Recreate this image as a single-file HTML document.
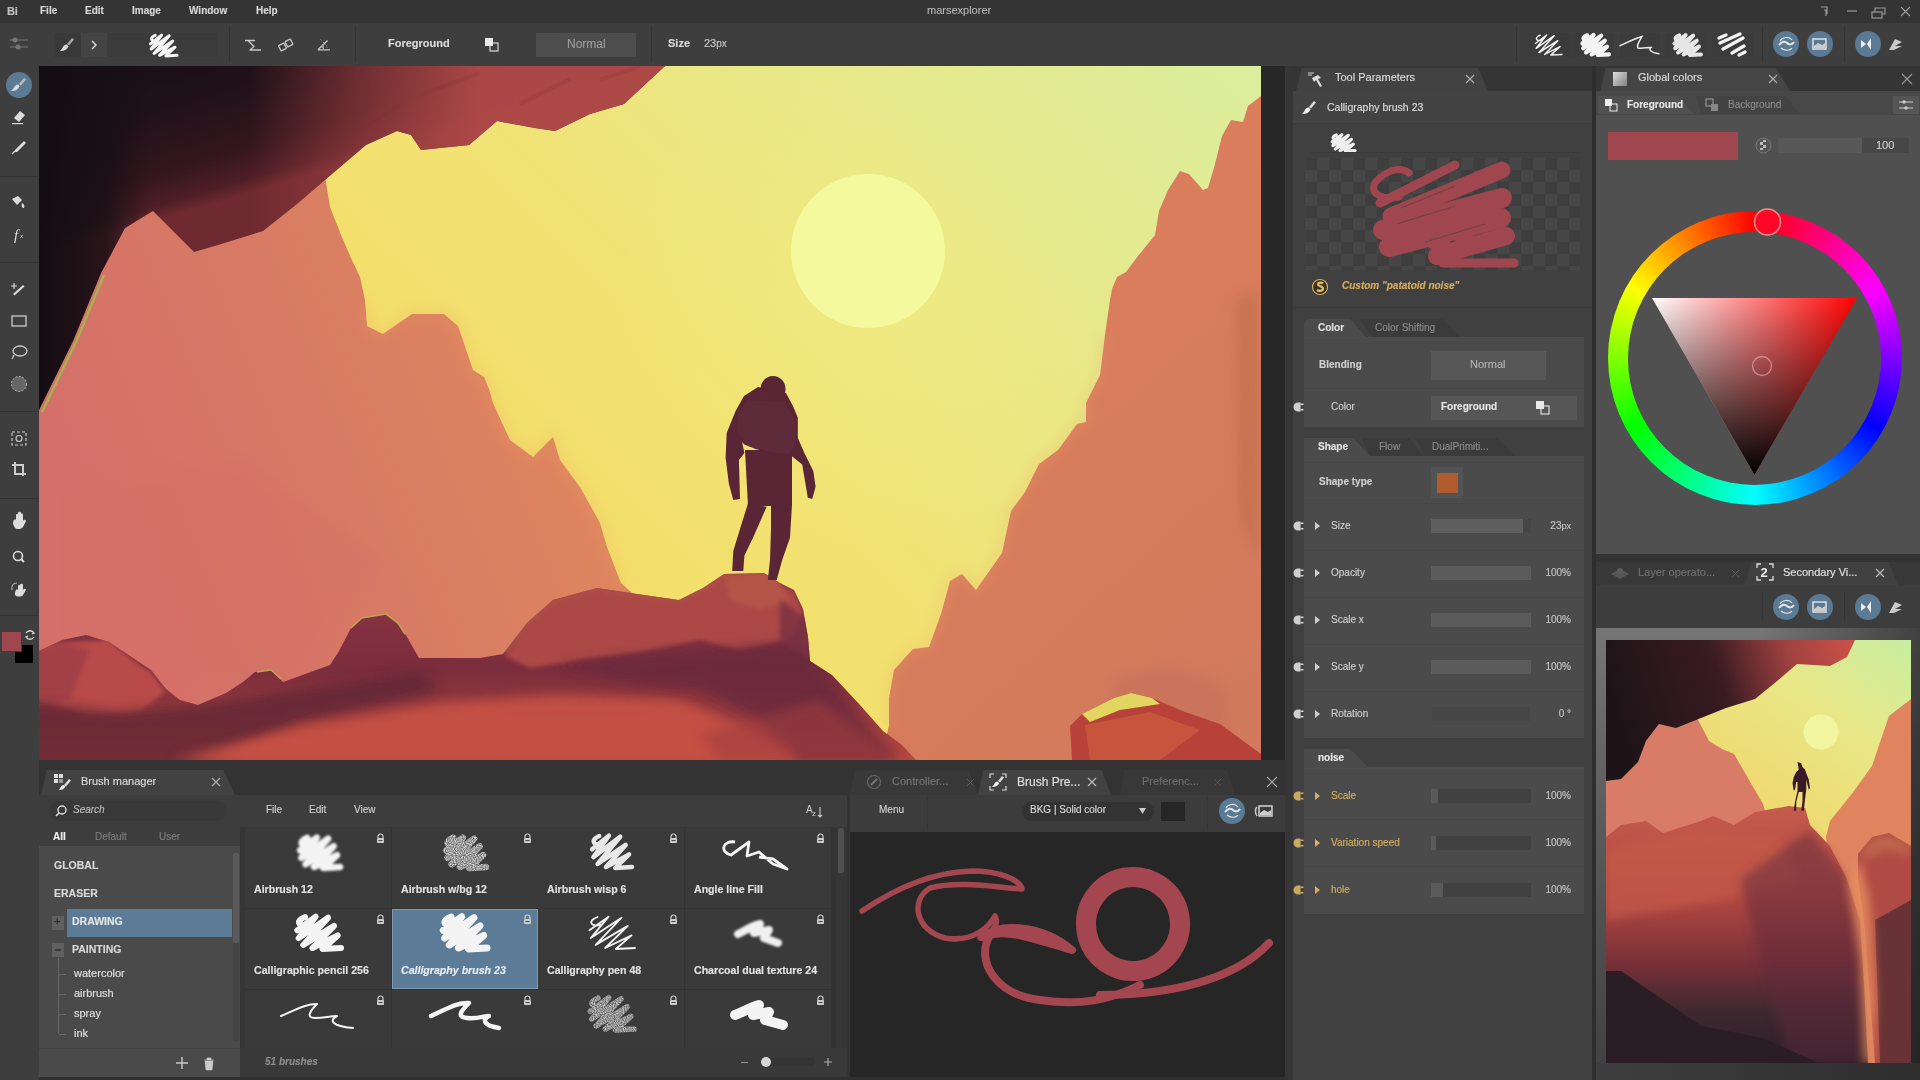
<!DOCTYPE html>
<html><head><meta charset="utf-8">
<style>
*{box-sizing:border-box;margin:0;padding:0}
body{will-change:transform}
html,body{width:1920px;height:1080px;overflow:hidden;background:#2e2e2e;font-family:"Liberation Sans",sans-serif;color:#d2d2d2;font-size:11px}
.a{position:absolute}
.t{position:absolute;white-space:nowrap;line-height:1;-webkit-text-stroke:0.15px currentColor}
.b{font-weight:bold}
</style></head><body>
<!-- MENU BAR -->
<div class="a" style="left:0;top:0;width:1920px;height:23px;background:#343434"></div>
<div class="t b" style="left:7px;top:6px;font-size:11px;color:#c0c0c0;letter-spacing:-0.3px">Bi</div>
<div class="t" style="left:40px;top:6px;font-size:10px;font-weight:bold;color:#d6d6d6">File</div>
<div class="t" style="left:85px;top:6px;font-size:10px;font-weight:bold;color:#d6d6d6">Edit</div>
<div class="t" style="left:132px;top:6px;font-size:10px;font-weight:bold;color:#d6d6d6">Image</div>
<div class="t" style="left:189px;top:6px;font-size:10px;font-weight:bold;color:#d6d6d6">Window</div>
<div class="t" style="left:256px;top:6px;font-size:10px;font-weight:bold;color:#d6d6d6">Help</div>
<div class="t" style="left:927px;top:5px;color:#b4b4b4">marsexplorer</div>
<svg class="a" style="left:1815px;top:3px" width="105" height="18" viewBox="0 0 105 18">
 <g fill="none" stroke="#9a9a9a" stroke-width="1.2">
  <path d="M6 4h6v7M9 7h2v6" />
  <path d="M32 8h10" />
  <rect x="57" y="9" width="10" height="6"/><path d="M60 9V5h10v6h-3"/>
  <path d="M86 4l9 9M95 4l-9 9"/>
 </g>
</svg>

<!-- TOOLBAR -->
<div class="a" style="left:0;top:23px;width:1920px;height:43px;background:#3e3e3e"></div>
<svg class="a" style="left:8px;top:35px" width="24" height="18" viewBox="0 0 24 18">
 <g stroke="#777" stroke-width="1.2" fill="#777"><path d="M2 5h18M2 12h18"/><circle cx="7" cy="5" r="2"/><circle cx="10" cy="12" r="2"/></g>
</svg>
<div class="a" style="left:54px;top:33px;width:27px;height:24px;background:#393939"></div>
<div class="a" style="left:81px;top:33px;width:26px;height:24px;background:#444444"></div>
<div class="a" style="left:108px;top:33px;width:109px;height:24px;background:#3b3b3b"></div>
<svg class="a" style="left:58px;top:36px" width="18" height="18" viewBox="0 0 18 18"><path d="M14 2l2 1.5-5 6-2-1.5z" fill="#aaa"/><path d="M9 8.5c-3 0-4 2-4.5 3.5L2 15c3 .5 7-1 8.5-4.5z" fill="#d8d8d8"/></svg>
<svg class="a" style="left:89px;top:39px" width="10" height="12" viewBox="0 0 10 12"><path d="M3 2l4 4-4 4" fill="none" stroke="#ddd" stroke-width="1.4"/></svg>
<svg class="a" style="left:140px;top:30px" width="44" height="30" viewBox="140 30 44 30"><path d="M150.4 43.9L161.6 35.1 151.2 49.0 169.2 35.8 154.0 53.4 172.8 41.0 159.6 55.3 175.0 47.2 165.8 56.0 177.0 55.3 M157.4 40.2C151.8 42.4 148.4 38.0 155.2 35.3" fill="none" stroke="#f4f4f4" stroke-width="3" stroke-linecap="round" stroke-linejoin="round" /></svg>
<div class="a" style="left:229px;top:26px;width:1px;height:36px;background:#333"></div>
<svg class="a" style="left:230px;top:28px" width="120" height="32" viewBox="230 28 120 32">
 <g fill="none" stroke="#c8c8c8" stroke-width="1.3">
  <path d="M245 40.5H255M248 40.5L254 46.5 250 50M249.5 50H261"/>
  <rect x="279.5" y="44" width="6" height="6" rx="0.8" transform="rotate(-28 282.5 47)"/>
  <rect x="286" y="40" width="6" height="6" rx="0.8" transform="rotate(-28 289 43)"/>
  <path d="M318 49.8H330M318 49.8L327.5 40.5"/>
  <path d="M321 47l3-3v5.8z" fill="#9a9a9a" stroke="none"/>
  <path d="M320.5 39.5l1 1M323 42l1 1M325.5 44.5l1 1M326.5 47l1 0.5" stroke-width="1" stroke="#999"/>
 </g>
</svg>
<div class="a" style="left:355px;top:26px;width:1px;height:36px;background:#353535"></div>
<div class="t b" style="left:388px;top:38px;font-size:11px;color:#dcdcdc">Foreground</div>
<svg class="a" style="left:484px;top:37px" width="16" height="16" viewBox="0 0 16 16"><rect x="6" y="6" width="8" height="8" fill="none" stroke="#ddd" stroke-width="1.2"/><rect x="1" y="1" width="8" height="8" fill="#e8e8e8"/></svg>
<div class="a" style="left:536px;top:33px;width:100px;height:24px;background:#4d4d4d"></div>
<div class="t" style="left:567px;top:38px;font-size:12px;color:#9c9c9c">Normal</div>
<div class="a" style="left:651px;top:26px;width:1px;height:36px;background:#353535"></div>
<div class="t b" style="left:668px;top:38px;font-size:11px;color:#d8d8d8">Size</div>
<div class="t" style="left:704px;top:38px;font-size:11px;color:#c8c8c8">23<span style="font-size:10px">px</span></div>

<div class="a" style="left:1516px;top:26px;width:1px;height:36px;background:#353535"></div>
<div class="a" style="left:1528px;top:33px;width:42px;height:24px;background:#3b3b3b"></div>
<div class="a" style="left:1574px;top:33px;width:40px;height:24px;background:#3b3b3b"></div>
<div class="a" style="left:1620px;top:33px;width:40px;height:24px;background:#3b3b3b"></div>
<div class="a" style="left:1666px;top:33px;width:40px;height:24px;background:#3b3b3b"></div>
<div class="a" style="left:1711px;top:33px;width:42px;height:24px;background:#3b3b3b"></div>
<svg class="a" style="left:1525px;top:28px" width="235" height="34" viewBox="1525 28 235 34">
<path d="M1535.4 43.5L1546.6 35.0 1536.2 48.3 1554.2 35.7 1539.0 52.5 1557.8 40.7 1544.6 54.4 1560.0 46.6 1550.8 55.0 1562.0 54.4 M1542.4 39.9C1536.8 42.0 1533.4 37.8 1540.2 35.3" fill="none" stroke="#f4f4f4" stroke-width="1.5" stroke-linecap="round" stroke-linejoin="round" />
<path d="M1582.4 43.5L1593.6 35.0 1583.2 48.3 1601.2 35.7 1586.0 52.5 1604.8 40.7 1591.6 54.4 1607.0 46.6 1597.8 55.0 1609.0 54.4 M1589.4 39.9C1583.8 42.0 1580.4 37.8 1587.2 35.3" fill="none" stroke="#f4f4f4" stroke-width="4.2" stroke-linecap="round" stroke-linejoin="round" />
<path d="M1620 45.7C1628 42 1636 38 1642 36.5 1640 40 1636 45 1638 48 1643 49 1648 47 1651 47.5 1648 50 1652 53 1659 53.7" fill="none" stroke="#eeeeee" stroke-width="1.5" stroke-linecap="round"/>
<path d="M1674.4 43.5L1685.6 35.0 1675.2 48.3 1693.2 35.7 1678.0 52.5 1696.8 40.7 1683.6 54.4 1699.0 46.6 1689.8 55.0 1701.0 54.4 M1681.4 39.9C1675.8 42.0 1672.4 37.8 1679.2 35.3" fill="none" stroke="#e6e6e6" stroke-width="4" stroke-linecap="round" stroke-linejoin="round" />
<path d="M1719 38l7-3M1720 43l20-9M1723 49l20-11M1732 53l12-7M1739 55l6-3" fill="none" stroke="#f2f2f2" stroke-width="3.4" stroke-linecap="round"/>
</svg>
<div class="a" style="left:1762px;top:26px;width:1px;height:36px;background:#353535"></div>
<div class="a" style="left:1773px;top:31px;width:26px;height:26px;border-radius:50%;background:#5b7a94"></div>
<div class="a" style="left:1807px;top:31px;width:26px;height:26px;border-radius:50%;background:#5b7a94"></div>
<div class="a" style="left:1844px;top:26px;width:1px;height:36px;background:#353535"></div>
<div class="a" style="left:1855px;top:31px;width:26px;height:26px;border-radius:50%;background:#5b7a94"></div>
<svg class="a" style="left:1773px;top:31px" width="130" height="26" viewBox="0 0 130 26">
 <g fill="none" stroke="#e8e8e8" stroke-width="2"><path d="M6 14c3-4 6-4 8-2s5 2 7-1"/><path d="M7 10c2-4 9-5 12-1M8 17c3 3 9 3 11 0" stroke-width="1.2"/></g>
 <rect x="40" y="8" width="13" height="10" fill="none" stroke="#e8e8e8" stroke-width="1.4"/><path d="M41 15l4-3 4 2 3-2v5h-11z" fill="#ccc"/>
 <path d="M88 9l5 4-5 4zM98 7l-4 6 4 6z" fill="#eee"/>
 <path d="M122 8l7 3-7 4 7 0-8 4h-5z" fill="#c9c9c9"/>
</svg>

<!-- LEFT TOOLS -->
<div class="a" style="left:0;top:66px;width:39px;height:1014px;background:#3e3e3e"></div>
<div class="a" style="left:0;top:176px;width:39px;height:1px;background:#333"></div>
<div class="a" style="left:0;top:262px;width:39px;height:1px;background:#333"></div>
<div class="a" style="left:0;top:411px;width:39px;height:1px;background:#333"></div>
<div class="a" style="left:0;top:498px;width:39px;height:1px;background:#333"></div>
<div class="a" style="left:0;top:615px;width:39px;height:1px;background:#333"></div>
<div class="a" style="left:6px;top:72px;width:26px;height:26px;border-radius:50%;background:#5b7a94"></div>
<svg class="a" style="left:0;top:66px" width="39" height="540" viewBox="0 66 39 540">
 <g fill="#dcdcdc">
  <path d="M24 78l2 1.5-5 6-2-1.5z" fill="#bbb"/><path d="M18.5 84.5c-3 0-4 2-4.5 3.5L11 91c3 .5 7-1 8.5-4.5z"/>
  <path d="M14 118l6-7 5 4-6 7z"/><rect x="12" y="123" width="11" height="1.2"/>
  <path d="M24 141l2 2-9 9-2 0 0-2z"/><path d="M12 154l3-3" stroke="#ddd" stroke-width="1.3"/>
  <path d="M12 199l6-3 4 4-5 5z"/><path d="M22 203c2 1 3 3 2 5-2 0-3-2-2-5z"/>
  <text x="14" y="240" font-family="Liberation Serif" font-style="italic" font-size="15" fill="#ddd">f</text><text x="20" y="238" font-family="Liberation Serif" font-style="italic" font-size="7" fill="#ddd">x</text>
  <path d="M13 294l10-9 1.5 1.5-10 9z"/><path d="M14 283v6M11 286h6" stroke="#ddd" stroke-width="1.2"/>
  <rect x="12" y="316" width="14" height="10" fill="none" stroke="#ccc" stroke-width="1.3"/>
  <ellipse cx="20" cy="351" rx="7" ry="5" fill="none" stroke="#ccc" stroke-width="1.3"/><path d="M14 355l-2 4" stroke="#ccc" stroke-width="1.2"/>
  <circle cx="19" cy="384" r="7.5" fill="#666" stroke="#bbb" stroke-width="1" stroke-dasharray="2 1.5"/>
  <rect x="12" y="432" width="14" height="13" fill="none" stroke="#ccc" stroke-width="1.2" stroke-dasharray="3 2"/><circle cx="19" cy="438.5" r="3" fill="none" stroke="#ccc" stroke-width="1.1"/>
  <path d="M15 462v12h11M12 465h11v11" fill="none" stroke="#ccc" stroke-width="2"/>
  <path d="M13 524c0-4 2-6 3-4v-5c1-2 2-1 2 0v4-6c1-2 3-1 3 0v6-5c1-1 2-1 2 1v6c1-1 2-2 3 0l-3 6c-1 2-6 3-8 1z"/>
  <circle cx="18" cy="556" r="4.5" fill="none" stroke="#ddd" stroke-width="1.6"/><path d="M21 559l3 3" stroke="#ddd" stroke-width="2"/>
  <path d="M15 594c0-4 2-6 3-4v-4c1-2 2-1 2 0v3-4c1-2 3-1 3 0v5c1-1 2-2 3 0l-3 5c-1 2-6 2-8 0z"/><path d="M12 590c-1-4 1-7 5-7" fill="none" stroke="#aaa" stroke-width="1.2"/>
 </g>
</svg>
<div class="a" style="left:2px;top:632px;width:20px;height:20px;background:#a0464f"></div>
<div class="a" style="left:15px;top:645px;width:18px;height:18px;background:#000"></div>
<div class="a" style="left:2px;top:632px;width:20px;height:20px;background:#a0464f;border-right:1px solid #3e3e3e;border-bottom:1px solid #3e3e3e"></div>
<svg class="a" style="left:24px;top:628px" width="12" height="14" viewBox="0 0 12 14"><path d="M2 5c2-3 6-3 8 0M8 3l2 2-2 1M10 9c-2 3-6 3-8 0M4 11l-2-2 2-1" fill="none" stroke="#ddd" stroke-width="1.3"/></svg>

<!-- CANVAS -->
<svg class="a" style="left:39px;top:66px" width="1222" height="694" viewBox="39 66 1222 694">
 <defs>
  <linearGradient id="sky" x1="1261" y1="66" x2="560" y2="760" gradientUnits="userSpaceOnUse">
   <stop offset="0" stop-color="#dcee9e"/><stop offset="0.35" stop-color="#e8e888"/><stop offset="0.65" stop-color="#f2e272"/><stop offset="1" stop-color="#f4da62"/>
  </linearGradient>
  <radialGradient id="glow" cx="868" cy="300" r="260" gradientUnits="userSpaceOnUse">
   <stop offset="0" stop-color="#f6f080" stop-opacity="0.35"/><stop offset="1" stop-color="#f6f080" stop-opacity="0"/>
  </radialGradient>
  <linearGradient id="lcliff" x1="80" y1="480" x2="520" y2="300" gradientUnits="userSpaceOnUse">
   <stop offset="0" stop-color="#d4706a"/><stop offset="0.5" stop-color="#d87a64"/><stop offset="1" stop-color="#de865e"/>
  </linearGradient>
  <linearGradient id="rcliff" x1="900" y1="300" x2="1261" y2="700" gradientUnits="userSpaceOnUse">
   <stop offset="0" stop-color="#dc7e5c"/><stop offset="1" stop-color="#d27a5d"/>
  </linearGradient>
  <linearGradient id="drock" x1="200" y1="200" x2="520" y2="90" gradientUnits="userSpaceOnUse">
   <stop offset="0" stop-color="#181015"/><stop offset="0.35" stop-color="#28131a"/><stop offset="0.6" stop-color="#4a1e25"/><stop offset="0.8" stop-color="#9a3c3e"/><stop offset="1" stop-color="#b24a48"/>
  </linearGradient>
  <linearGradient id="frock" x1="0" y1="580" x2="0" y2="760" gradientUnits="userSpaceOnUse">
   <stop offset="0" stop-color="#8c3444"/><stop offset="0.5" stop-color="#7a2d3c"/><stop offset="1" stop-color="#b84a40"/>
  </linearGradient>
  <filter id="blur2" filterUnits="userSpaceOnUse" x="0" y="0" width="1400" height="900"><feGaussianBlur stdDeviation="2"/></filter>
  <filter id="blur6" filterUnits="userSpaceOnUse" x="0" y="0" width="1400" height="900"><feGaussianBlur stdDeviation="6"/></filter><filter id="blur12" filterUnits="userSpaceOnUse" x="0" y="0" width="1400" height="900"><feGaussianBlur stdDeviation="12"/></filter>
 </defs>
 <rect x="39" y="66" width="1222" height="694" fill="url(#sky)"/>
 <rect x="39" y="66" width="1222" height="694" fill="url(#glow)"/>
 <circle cx="868" cy="251" r="77" fill="#f3f99c"/>
 <!-- left cliff -->
 <path fill="url(#lcliff)" d="M39 300L120 200 250 170 320 150 325 176 330 207 341 235 351 258 360 277 365 300 367 326 383 334 412 314 444 314 458 326 473 370 484 377 489 389 493 403 510 440 533 457 553 437 560 460 580 487 600 523 607 547 617 573 621 583 640 600 640 760 39 760Z"/>
 <path fill="#d47066" opacity="0.35" filter="url(#blur6)" d="M60 480L250 460 380 560 300 690 60 680Z"/>
 <path d="M104 275L76 342 42 412" fill="none" stroke="#a8b050" stroke-width="2.5"/>
 <!-- right cliff -->
 <path fill="url(#rcliff)" d="M1261 96L1248 106 1243 122 1231 120 1222 136 1215 164 1208 188 1203 190 1189 174 1180 171 1168 190 1159 211 1155 235 1138 256 1126 272 1117 277 1112 289 1110 300 1105 335 1100 375 1086 403 1086 422 1077 424 1058 450 1039 464 1025 492 1011 511 1002 553 976 590 962 574 950 581 941 614 929 647 913 649 894 670 889 698 889 726 880 760 1261 760Z"/>
 <path fill="#b86a4a" opacity="0.5" filter="url(#blur6)" d="M1235 300L1258 290 1258 560 1240 520Z"/>
 <path fill="#c4705a" opacity="0.5" filter="url(#blur6)" d="M1110 680C1150 660 1220 665 1230 700L1230 740 1110 740Z"/>
 <!-- edge glow -->
 <path d="M365 300L367 326 383 334 412 314 444 314 458 326 473 370 484 377 489 389 493 403 510 440 533 457 553 437 560 460 580 487 600 523 607 547 617 573 621 583" fill="none" stroke="#eca068" stroke-width="10" opacity="0.22" filter="url(#blur6)"/>
 <path d="M1105 335L1100 375 1086 403 1086 422 1077 424 1058 450 1039 464 1025 492 1011 511 1002 553 976 590 962 574 950 581 941 614 929 647 913 649 894 670 889 698 889 726" fill="none" stroke="#eca068" stroke-width="10" opacity="0.22" filter="url(#blur6)"/>
 <!-- dark rock -->
 <defs>
  <linearGradient id="dr1" x1="100" y1="50" x2="151.7" y2="222.4" gradientUnits="userSpaceOnUse">
   <stop offset="0" stop-color="#150f13"/><stop offset="0.45" stop-color="#22121a"/><stop offset="0.75" stop-color="#34161d"/><stop offset="0.92" stop-color="#4e1e26"/><stop offset="1" stop-color="#6e2a30"/>
  </linearGradient>
  <linearGradient id="dr2" x1="250" y1="0" x2="480" y2="0" gradientUnits="userSpaceOnUse">
   <stop offset="0" stop-color="#ac4646" stop-opacity="0"/><stop offset="0.5" stop-color="#ac4646" stop-opacity="0.55"/><stop offset="1" stop-color="#b04a48" stop-opacity="0.95"/>
  </linearGradient>
  <linearGradient id="dr3" x1="39" y1="0" x2="150" y2="0" gradientUnits="userSpaceOnUse">
   <stop offset="0" stop-color="#120d11" stop-opacity="1"/><stop offset="0.6" stop-color="#160f14" stop-opacity="0.8"/><stop offset="1" stop-color="#160f14" stop-opacity="0"/>
  </linearGradient>
 </defs>
 <path d="M39 66L665 66 624 104 590 114 555 131 535 128 497 121 469 145 421 150 411 135 397 131 366 145 325 180 297 204 263 231 218 245 194 252 170 228 153 211 125 228 101 273 73 341 39 410Z" fill="url(#dr1)"/>
 <path d="M39 66L665 66 624 104 590 114 555 131 535 128 497 121 469 145 421 150 411 135 397 131 366 145 325 180 297 204 263 231 218 245 194 252 170 228 153 211 125 228 101 273 73 341 39 410Z" fill="url(#dr2)"/>
 <path d="M39 66L665 66 624 104 590 114 555 131 535 128 497 121 469 145 421 150 411 135 397 131 366 145 325 180 297 204 263 231 218 245 194 252 170 228 153 211 125 228 101 273 73 341 39 410Z" fill="url(#dr3)"/>
 <g clip-path="url(#drclip)" opacity="0.55">
  <path d="M420 95l60-22M520 104l50-25M360 130l40-25M600 80l40-14" stroke="#7a3036" stroke-width="4" opacity="0.3"/>
 </g>
 <clipPath id="drclip"><path d="M39 66L665 66 624 104 590 114 555 131 535 128 497 121 469 145 421 150 411 135 397 131 366 145 325 180 297 204 263 231 218 245 194 252 170 228 153 211 125 228 101 273 73 341 39 410Z"/></clipPath>
 <!-- foreground rocks -->
 <clipPath id="frclip"><path d="M39 651L62 640 86 635 109 642 133 658 151 670 166 689 180 700 198 705 226 693 243 682 255 672 271 670 283 682 297 677 330 665 339 651 351 628 362 618 386 614 398 623 407 637 419 658 437 658 480 658 503 654 527 623 553 600 597 588 644 595 679 600 703 588 724 574 764 573 780 583 794 590 803 609 808 637 810 661 832 675 860 705 883 731 902 745 916 760 39 760Z"/></clipPath>
 <g clip-path="url(#frclip)">
  <rect x="39" y="570" width="880" height="190" fill="url(#frock)"/>
  <path fill="#b84c4a" filter="url(#blur2)" d="M20 645L109 640 133 660 151 672 165 692 140 712 90 716 20 695Z"/>
  <path fill="#9a3c46" opacity="0.7" filter="url(#blur2)" d="M20 655L62 642 90 650 70 700 20 710Z"/>
  <path fill="#5e2535" opacity="0.8" filter="url(#blur6)" d="M0 700L120 712 200 705 300 690 420 672 440 690 300 722 160 780 0 780Z"/>
  <path fill="#c85244" opacity="0.9" filter="url(#blur6)" d="M170 760L300 728 440 703 560 695 680 700 760 735 800 760Z"/>
  <path fill="#ac4a46" filter="url(#blur2)" d="M505 656L527 625 553 602 597 590 644 597 679 602 703 590 724 576 764 575 780 585 794 592 803 612 790 640 740 650 700 640 640 652 580 660 530 668Z"/>
  <path fill="#b85a48" opacity="0.7" filter="url(#blur2)" d="M725 578L764 575 780 585 790 600 760 610 730 600Z"/>
  <path fill="#6a2b3e" opacity="0.85" filter="url(#blur6)" d="M560 665L650 655 740 648 800 640 830 680 870 730 900 760 800 760 760 720 700 690 620 680Z"/>
  <path fill="#7a3342" opacity="0.8" filter="url(#blur2)" d="M780 600L808 620 810 661 780 640Z"/>
  <path d="M505 652L527 623 553 601 597 589 644 596 679 601 703 589 724 575 764 574 780 584" fill="none" stroke="#cc6a50" stroke-width="3" opacity="0.8" filter="url(#blur2)"/>
  <path fill="#a03c40" opacity="0.6" filter="url(#blur6)" d="M700 735L820 700 900 760 720 760Z"/>
 </g>
 <path d="M351 628L362 618 386 614 398 623 405 634" fill="none" stroke="#c0b850" stroke-width="1.6" opacity="0.8"/>
 <path d="M257 672L271 670 281 679" fill="none" stroke="#c0b850" stroke-width="1.3" opacity="0.8"/>
 <!-- right rock -->
 <path fill="#b8423a" d="M1070 726L1082 714 1114 698 1131 693 1152 698 1185 712 1220 724 1261 754 1261 760 1072 760Z"/>
 <path fill="#e2d560" d="M1082 714L1114 698 1131 693 1152 698 1160 704 1120 710 1090 722Z"/>
 <path fill="#d06040" opacity="0.6" d="M1085 725L1150 712 1200 730 1160 760 1090 760Z"/>
 <!-- astronaut -->
 <g fill="#5a2636">
  <ellipse cx="773" cy="389" rx="12.5" ry="13"/>
  <path d="M744 396L758 387 786 393 793.3 406.7 797.8 417.8 797.8 444.4 788.9 455.6 773.3 453.3 755.6 448.9 744.4 444.4 733.3 433.3 735.6 411Z"/>
  <path d="M735.6 411L726.7 433 725.6 457.8 728.9 484 733.3 500 740 498.9 739.6 484 738.9 460 744.4 453Z"/>
  <path d="M795.6 433L804.4 453 813.3 471 815.6 486.7 812.2 498.9 807.8 497.8 805.6 484.4 802.2 464.4 791 455.6Z"/>
  <path d="M745 450L792 450 792 506 748 506Z"/>
  <path d="M747.8 504L766.7 506.7 753 537.8 744.4 555.6 743.3 571 732.2 571 733.3 551 740 529Z"/>
  <path d="M771 504.4L792 504.4 790 537.8 782.2 560 776.7 580 767.8 580 770 560 771 529Z"/>
 </g>
 <path d="M748 400L784 402 796 420 796 444 788 454 770 452 748 446 737 432 738 412Z" fill="#62303e" opacity="0.5"/>
 <path d="M762 396L770 446M752 442c6 6 20 10 30 8" fill="none" stroke="#6e2a3a" stroke-width="1" opacity="0.6"/>
</svg>

<!-- dark strip right of canvas -->
<div class="a" style="left:1261px;top:66px;width:24px;height:694px;background:#272727"></div>
<div class="a" style="left:1285px;top:66px;width:8px;height:1014px;background:#363636"></div>
<!-- TOOL PARAMETERS -->
<div class="a" style="left:1293px;top:66px;width:299px;height:25px;background:#353535"></div>
<div class="a" style="left:1296px;top:68px;width:192px;height:23px;background:#424242;clip-path:polygon(3% 0,95% 0,100% 100%,0 100%)"></div>
<svg class="a" style="left:1306px;top:70px" width="20" height="18" viewBox="0 0 20 18"><g fill="#ddd"><path d="M6 8l6-3 3 3-3 1 4 7-2 1-4-7-2 2z"/><path d="M2 3h6M2 5h4" stroke="#ccc" stroke-width="1"/></g></svg>
<div class="t" style="left:1335px;top:72px;font-size:11px;color:#dcdcdc">Tool Parameters</div>
<svg class="a" style="left:1465px;top:74px" width="10" height="10" viewBox="0 0 10 10"><path d="M1 1l8 8M9 1l-8 8" stroke="#aaa" stroke-width="1.2"/></svg>
<div class="a" style="left:1592px;top:66px;width:4px;height:1014px;background:#2e2e2e"></div>
<div class="a" style="left:1293px;top:91px;width:299px;height:989px;background:#404040"></div>
<div class="a" style="left:1293px;top:91px;width:299px;height:33px;background:#434343;border-bottom:1px solid #3a3a3a"></div>
<svg class="a" style="left:1300px;top:99px" width="18" height="18" viewBox="0 0 18 18"><path d="M14 2l2 1.5-5 6-2-1.5z" fill="#ddd"/><path d="M9 8.5c-3 0-4 2-4.5 3.5L2 15c3 .5 7-1 8.5-4.5z" fill="#f0f0f0"/></svg>
<div class="t" style="left:1327px;top:102px;font-size:10.5px;color:#dedede">Calligraphy brush 23</div>
<svg class="a" style="left:1325px;top:130px" width="36" height="26" viewBox="1325 130 36 26"><path d="M1332.2 141.7L1341.8 134.8 1332.9 145.6 1348.3 135.4 1335.3 149.0 1351.4 139.4 1340.1 150.5 1353.3 144.2 1345.4 151.0 1355.0 150.5 M1338.2 138.8C1333.4 140.5 1330.5 137.1 1336.3 135.0" fill="none" stroke="#eeeeee" stroke-width="3.2" stroke-linecap="round" stroke-linejoin="round" /></svg>
<div class="a" style="left:1310px;top:152px;width:270px;height:1px;background:#3b3b3b"></div>
<div class="a" style="left:1305px;top:158px;width:275px;height:112px;background-color:#3e3e3e;background-image:linear-gradient(45deg,#464646 25%,transparent 25%,transparent 75%,#464646 75%),linear-gradient(45deg,#464646 25%,transparent 25%,transparent 75%,#464646 75%);background-size:24px 24px;background-position:0 0,12px 12px"></div>
<svg class="a" style="left:1305px;top:158px" width="275" height="112" viewBox="0 0 275 112">
 <g fill="none" stroke="#a0464f" stroke-linecap="round" stroke-linejoin="round">
  <path d="M104 15C96 8 80 12 70 25 64 36 78 42 94 39" stroke-width="7"/>
  <path d="M75 45L150 7" stroke-width="9"/>
  <path d="M86 58L197 12" stroke-width="17"/>
  <path d="M78 72L197 40" stroke-width="20"/>
  <path d="M84 89L196 60" stroke-width="20"/>
  <path d="M132 98L201 78" stroke-width="18"/>
  <path d="M138 105L209 105" stroke-width="9"/>
  <path d="M120 50L160 80M100 66L140 90" stroke-width="16"/>
 </g>
 <path d="M96 50L150 28M92 66L150 48M120 84L180 66" stroke="#3f3f3f" stroke-width="1.2" opacity="0.5"/>
</svg>
<svg class="a" style="left:1311px;top:278px" width="18" height="18" viewBox="0 0 18 18"><circle cx="9" cy="9" r="7.5" fill="#3a3320" stroke="#d8b060" stroke-width="1.2"/><path d="M12 5.5c-2-1.5-5-1-5 1s5 1.5 5 4-4 3-6 1.5" fill="none" stroke="#e8c070" stroke-width="2.2"/></svg>
<div class="t" style="left:1342px;top:281px;font-size:10px;font-style:italic;font-weight:bold;color:#d7ad5c">Custom "patatoid noise"</div>
<div class="a" style="left:1293px;top:307px;width:299px;height:1px;background:#3a3a3a"></div>

<!-- Color section -->
<div class="a" style="left:1304px;top:319px;width:62px;height:18px;background:#4b4b4b;clip-path:polygon(0 0,75% 0,100% 100%,0 100%);border-radius:6px 0 0 0"></div>
<div class="a" style="left:1360px;top:319px;width:100px;height:18px;background:#3b3b3b;clip-path:polygon(0 0,82% 0,100% 100%,12% 100%)"></div>
<div class="t b" style="left:1318px;top:323px;font-size:10px;color:#e0e0e0">Color</div>
<div class="t" style="left:1375px;top:323px;font-size:10px;color:#8a8a8a">Color Shifting</div>
<div class="a" style="left:1304px;top:337px;width:280px;height:90px;background:#4b4b4b"></div>
<div class="a" style="left:1304px;top:343px;width:280px;height:1px;background:#474747"></div>
<div class="a" style="left:1304px;top:388px;width:280px;height:1px;background:#454545"></div>
<div class="t b" style="left:1319px;top:360px;font-size:10px;color:#cfcfcf">Blending</div>
<div class="a" style="left:1431px;top:351px;width:115px;height:29px;background:#575757"></div>
<div class="t" style="left:1470px;top:359px;font-size:11px;color:#b0b0b0">Normal</div>
<svg class="a" style="left:1292px;top:401px" width="14" height="12" viewBox="0 0 14 12"><path d="M1.5 6a4.5 4.5 0 0 1 4.5-4.5H8.5v9H6A4.5 4.5 0 0 1 1.5 6z" fill="#cfcfcf"/><rect x="8.5" y="2.5" width="3" height="1.6" fill="#cfcfcf"/><rect x="8.5" y="7.9" width="3" height="1.6" fill="#cfcfcf"/></svg>
<div class="t" style="left:1331px;top:402px;font-size:10px;color:#cfcfcf">Color</div>
<div class="a" style="left:1431px;top:396px;width:146px;height:24px;background:#565656"></div>
<div class="t b" style="left:1441px;top:402px;font-size:10px;color:#e4e4e4">Foreground</div>
<svg class="a" style="left:1535px;top:400px" width="16" height="16" viewBox="0 0 16 16"><rect x="6" y="6" width="8" height="8" fill="none" stroke="#ddd" stroke-width="1.2"/><rect x="1" y="1" width="8" height="8" fill="#e8e8e8"/></svg>

<!-- Shape section -->
<div class="a" style="left:1304px;top:438px;width:66px;height:18px;background:#4b4b4b;clip-path:polygon(0 0,74% 0,100% 100%,0 100%)"></div>
<div class="a" style="left:1362px;top:438px;width:62px;height:18px;background:#3b3b3b;clip-path:polygon(0 0,75% 0,100% 100%,12% 100%)"></div>
<div class="a" style="left:1415px;top:438px;width:100px;height:18px;background:#3b3b3b;clip-path:polygon(0 0,82% 0,100% 100%,10% 100%)"></div>
<div class="t b" style="left:1318px;top:442px;font-size:10px;color:#e0e0e0">Shape</div>
<div class="t" style="left:1379px;top:442px;font-size:10px;color:#8a8a8a">Flow</div>
<div class="t" style="left:1432px;top:442px;font-size:10px;color:#8a8a8a">DualPrimiti...</div>
<div class="a" style="left:1304px;top:456px;width:280px;height:282px;background:#4b4b4b"></div>
<div class="a" style="left:1304px;top:462px;width:280px;height:1px;background:#474747"></div>
<div class="t b" style="left:1319px;top:477px;font-size:10px;color:#cfcfcf">Shape type</div>
<div class="a" style="left:1431px;top:467px;width:32px;height:31px;background:#535353"></div>
<div class="a" style="left:1437px;top:473px;width:21px;height:20px;background:#b15c2e"></div>

<div class="a" style="left:1304px;top:503px;width:280px;height:1px;background:#464646"></div>
<svg class="a" style="left:1292px;top:520px" width="28" height="12" viewBox="0 0 28 12"><path d="M1.5 6a4.5 4.5 0 0 1 4.5-4.5H8.5v9H6A4.5 4.5 0 0 1 1.5 6z" fill="#cfcfcf"/><rect x="8.5" y="2.5" width="3" height="1.6" fill="#cfcfcf"/><rect x="8.5" y="7.9" width="3" height="1.6" fill="#cfcfcf"/><path d="M23 2l5 4-5 4z" fill="#d0d0d0"/></svg>
<div class="t" style="left:1331px;top:521px;font-size:10px;color:#cfcfcf">Size</div>
<div class="a" style="left:1431px;top:519px;width:92px;height:14px;background:#5e5e5e"></div><div class="a" style="left:1523px;top:519px;width:8px;height:14px;background:#454545"></div>
<div class="t" style="right:349px;top:521px;font-size:10px;color:#c4c4c4">23<span style='font-size:9px'>px</span></div>
<div class="a" style="left:1304px;top:550px;width:280px;height:1px;background:#464646"></div>
<svg class="a" style="left:1292px;top:567px" width="28" height="12" viewBox="0 0 28 12"><path d="M1.5 6a4.5 4.5 0 0 1 4.5-4.5H8.5v9H6A4.5 4.5 0 0 1 1.5 6z" fill="#cfcfcf"/><rect x="8.5" y="2.5" width="3" height="1.6" fill="#cfcfcf"/><rect x="8.5" y="7.9" width="3" height="1.6" fill="#cfcfcf"/><path d="M23 2l5 4-5 4z" fill="#d0d0d0"/></svg>
<div class="t" style="left:1331px;top:568px;font-size:10px;color:#cfcfcf">Opacity</div>
<div class="a" style="left:1431px;top:566px;width:100px;height:14px;background:#5b5b5b"></div>
<div class="t" style="right:349px;top:568px;font-size:10px;color:#c4c4c4">100%</div>
<div class="a" style="left:1304px;top:597px;width:280px;height:1px;background:#464646"></div>
<svg class="a" style="left:1292px;top:614px" width="28" height="12" viewBox="0 0 28 12"><path d="M1.5 6a4.5 4.5 0 0 1 4.5-4.5H8.5v9H6A4.5 4.5 0 0 1 1.5 6z" fill="#cfcfcf"/><rect x="8.5" y="2.5" width="3" height="1.6" fill="#cfcfcf"/><rect x="8.5" y="7.9" width="3" height="1.6" fill="#cfcfcf"/><path d="M23 2l5 4-5 4z" fill="#d0d0d0"/></svg>
<div class="t" style="left:1331px;top:615px;font-size:10px;color:#cfcfcf">Scale x</div>
<div class="a" style="left:1431px;top:613px;width:100px;height:14px;background:#5b5b5b"></div>
<div class="t" style="right:349px;top:615px;font-size:10px;color:#c4c4c4">100%</div>
<div class="a" style="left:1304px;top:644px;width:280px;height:1px;background:#464646"></div>
<svg class="a" style="left:1292px;top:661px" width="28" height="12" viewBox="0 0 28 12"><path d="M1.5 6a4.5 4.5 0 0 1 4.5-4.5H8.5v9H6A4.5 4.5 0 0 1 1.5 6z" fill="#cfcfcf"/><rect x="8.5" y="2.5" width="3" height="1.6" fill="#cfcfcf"/><rect x="8.5" y="7.9" width="3" height="1.6" fill="#cfcfcf"/><path d="M23 2l5 4-5 4z" fill="#d0d0d0"/></svg>
<div class="t" style="left:1331px;top:662px;font-size:10px;color:#cfcfcf">Scale y</div>
<div class="a" style="left:1431px;top:660px;width:100px;height:14px;background:#5b5b5b"></div>
<div class="t" style="right:349px;top:662px;font-size:10px;color:#c4c4c4">100%</div>
<div class="a" style="left:1304px;top:691px;width:280px;height:1px;background:#464646"></div>
<svg class="a" style="left:1292px;top:708px" width="28" height="12" viewBox="0 0 28 12"><path d="M1.5 6a4.5 4.5 0 0 1 4.5-4.5H8.5v9H6A4.5 4.5 0 0 1 1.5 6z" fill="#cfcfcf"/><rect x="8.5" y="2.5" width="3" height="1.6" fill="#cfcfcf"/><rect x="8.5" y="7.9" width="3" height="1.6" fill="#cfcfcf"/><path d="M23 2l5 4-5 4z" fill="#d0d0d0"/></svg>
<div class="t" style="left:1331px;top:709px;font-size:10px;color:#cfcfcf">Rotation</div>
<div class="a" style="left:1432px;top:707px;width:98px;height:14px;background:#464646"></div>
<div class="t" style="right:349px;top:709px;font-size:10px;color:#c4c4c4">0 °</div>
<div class="a" style="left:1304px;top:749px;width:64px;height:18px;background:#4b4b4b;clip-path:polygon(0 0,72% 0,100% 100%,0 100%)"></div>
<div class="t b" style="left:1318px;top:753px;font-size:10px;color:#ececec">noise</div>
<div class="a" style="left:1304px;top:767px;width:280px;height:147px;background:#4b4b4b"></div>
<div class="a" style="left:1304px;top:773px;width:280px;height:1px;background:#474747"></div>
<svg class="a" style="left:1292px;top:790px" width="28" height="12" viewBox="0 0 28 12"><path d="M1.5 6a4.5 4.5 0 0 1 4.5-4.5H8.5v9H6A4.5 4.5 0 0 1 1.5 6z" fill="#c8aa60"/><rect x="8.5" y="2.5" width="3" height="1.6" fill="#c8aa60"/><rect x="8.5" y="7.9" width="3" height="1.6" fill="#c8aa60"/><path d="M23 2l5 4-5 4z" fill="#d8b060"/></svg>
<div class="t" style="left:1331px;top:791px;font-size:10px;color:#d7ad5c">Scale</div>
<div class="a" style="left:1431px;top:789px;width:100px;height:14px;background:#414141"></div><div class="a" style="left:1431px;top:789px;width:7px;height:14px;background:#5a5a5a"></div>
<div class="t" style="right:349px;top:791px;font-size:10px;color:#c4c4c4">100%</div>
<div class="a" style="left:1304px;top:819px;width:280px;height:1px;background:#464646"></div>
<svg class="a" style="left:1292px;top:837px" width="28" height="12" viewBox="0 0 28 12"><path d="M1.5 6a4.5 4.5 0 0 1 4.5-4.5H8.5v9H6A4.5 4.5 0 0 1 1.5 6z" fill="#c8aa60"/><rect x="8.5" y="2.5" width="3" height="1.6" fill="#c8aa60"/><rect x="8.5" y="7.9" width="3" height="1.6" fill="#c8aa60"/><path d="M23 2l5 4-5 4z" fill="#d8b060"/></svg>
<div class="t" style="left:1331px;top:838px;font-size:10px;color:#d7ad5c">Variation speed</div>
<div class="a" style="left:1431px;top:836px;width:100px;height:14px;background:#414141"></div><div class="a" style="left:1431px;top:836px;width:5px;height:14px;background:#5a5a5a"></div>
<div class="t" style="right:349px;top:838px;font-size:10px;color:#c4c4c4">100%</div>
<div class="a" style="left:1304px;top:866px;width:280px;height:1px;background:#464646"></div>
<svg class="a" style="left:1292px;top:884px" width="28" height="12" viewBox="0 0 28 12"><path d="M1.5 6a4.5 4.5 0 0 1 4.5-4.5H8.5v9H6A4.5 4.5 0 0 1 1.5 6z" fill="#c8aa60"/><rect x="8.5" y="2.5" width="3" height="1.6" fill="#c8aa60"/><rect x="8.5" y="7.9" width="3" height="1.6" fill="#c8aa60"/><path d="M23 2l5 4-5 4z" fill="#d8b060"/></svg>
<div class="t" style="left:1331px;top:885px;font-size:10px;color:#d7ad5c">hole</div>
<div class="a" style="left:1431px;top:883px;width:100px;height:14px;background:#414141"></div><div class="a" style="left:1431px;top:883px;width:12px;height:14px;background:#5a5a5a"></div>
<div class="t" style="right:349px;top:885px;font-size:10px;color:#c4c4c4">100%</div>
<!-- GLOBAL COLORS -->
<div class="a" style="left:1596px;top:66px;width:324px;height:25px;background:#353535"></div>
<div class="a" style="left:1600px;top:68px;width:191px;height:24px;background:#454545;clip-path:polygon(3% 0,92% 0,100% 100%,0 100%)"></div>
<div class="a" style="left:1613px;top:72px;width:14px;height:14px;background:linear-gradient(135deg,#eee,#888);opacity:.9"></div>
<div class="t" style="left:1638px;top:72px;font-size:11px;color:#dcdcdc">Global colors</div>
<svg class="a" style="left:1768px;top:74px" width="10" height="10" viewBox="0 0 10 10"><path d="M1 1l8 8M9 1l-8 8" stroke="#aaa" stroke-width="1.2"/></svg>
<svg class="a" style="left:1901px;top:73px" width="12" height="12" viewBox="0 0 12 12"><path d="M1 1l10 10M11 1l-10 10" stroke="#999" stroke-width="1.1"/></svg>
<div class="a" style="left:1596px;top:91px;width:324px;height:463px;background:#505050"></div>
<div class="a" style="left:1596px;top:91px;width:324px;height:24px;background:#484848"></div>
<div class="a" style="left:1598px;top:96px;width:96px;height:18px;background:#505050;clip-path:polygon(0 0,84% 0,100% 100%,0 100%)"></div>
<div class="a" style="left:1696px;top:96px;width:104px;height:18px;background:#434343;clip-path:polygon(0 0,86% 0,100% 100%,5% 100%)"></div>
<div class="a" style="left:1893px;top:96px;width:26px;height:18px;background:#555"></div>
<svg class="a" style="left:1604px;top:98px" width="14" height="14" viewBox="0 0 14 14"><rect x="6" y="6" width="7" height="7" fill="none" stroke="#ddd" stroke-width="1.1"/><rect x="1" y="1" width="7" height="7" fill="#eee"/></svg>
<div class="t b" style="left:1627px;top:100px;font-size:10px;color:#e6e6e6">Foreground</div>
<svg class="a" style="left:1705px;top:98px" width="14" height="14" viewBox="0 0 14 14"><rect x="1" y="1" width="7" height="7" fill="none" stroke="#999" stroke-width="1.1"/><rect x="6" y="6" width="7" height="7" fill="#888"/></svg>
<div class="t" style="left:1728px;top:100px;font-size:10px;color:#8a8a8a">Background</div>
<svg class="a" style="left:1898px;top:99px" width="16" height="12" viewBox="0 0 16 12"><path d="M1 3h14M1 9h14" stroke="#ccc" stroke-width="1"/><circle cx="6" cy="3" r="1.7" fill="#ccc"/><circle cx="8" cy="9" r="1.7" fill="#ccc"/></svg>
<div class="a" style="left:1608px;top:132px;width:130px;height:28px;background:#a0464f"></div>
<svg class="a" style="left:1755px;top:137px" width="17" height="17" viewBox="0 0 17 17"><circle cx="8.5" cy="8.5" r="7.5" fill="#555" stroke="#777" stroke-width="1"/><path d="M5 5h3v3H5zM8 8h3v3H8zM5 11h3v2H5zM8 3h3v2H8z" fill="#bbb"/></svg>
<div class="a" style="left:1778px;top:138px;width:131px;height:15px;background:#474747"></div>
<div class="a" style="left:1778px;top:138px;width:84px;height:15px;background:#585858"></div>
<div class="t" style="left:1876px;top:140px;font-size:11px;color:#d0d0d0">100</div>
<!-- wheel -->
<div class="a" style="left:1607.5px;top:211px;width:294px;height:294px;border-radius:50%;background:conic-gradient(from 0deg,#ff0000,#ff00ff,#0000ff,#00ffff,#00ff00,#ffff00,#ff0000)"></div>
<div class="a" style="left:1628px;top:231.5px;width:253px;height:253px;border-radius:50%;background:#505050"></div>
<svg class="a" style="left:1596px;top:200px" width="324" height="320" viewBox="1596 200 324 320">
 <defs>
  <linearGradient id="tw" x1="1652" y1="0" x2="1857" y2="0" gradientUnits="userSpaceOnUse"><stop offset="0" stop-color="#ffffff"/><stop offset="1" stop-color="#ff0000"/></linearGradient>
  <linearGradient id="tb" x1="0" y1="298" x2="0" y2="475" gradientUnits="userSpaceOnUse"><stop offset="0" stop-color="#000" stop-opacity="0"/><stop offset="1" stop-color="#000" stop-opacity="1"/></linearGradient>
 </defs>
 <path d="M1652 298L1857 298 1754.5 475Z" fill="url(#tw)"/>
 <path d="M1652 298L1857 298 1754.5 475Z" fill="url(#tb)"/>
 <circle cx="1762" cy="366" r="9.5" fill="none" stroke="#d89aa0" stroke-width="1.3" opacity=".8"/>
 <circle cx="1767.5" cy="222" r="13" fill="#ff0828" stroke="#e89090" stroke-width="1.5"/>
</svg>

<!-- SECONDARY VIEW -->
<div class="a" style="left:1596px;top:554px;width:324px;height:8px;background:#333333"></div>
<div class="a" style="left:1596px;top:562px;width:324px;height:23px;background:#393939"></div>
<div class="a" style="left:1745px;top:562px;width:153px;height:23px;background:#404040;clip-path:polygon(4% 0,94% 0,100% 100%,0 100%)"></div>
<svg class="a" style="left:1609px;top:565px" width="22" height="16" viewBox="0 0 22 16"><path d="M2 9l9-5 9 5-9 5z" fill="#555"/><circle cx="11" cy="6" r="3" fill="#5a5a5a"/></svg>
<div class="t" style="left:1638px;top:567px;font-size:11px;color:#707070">Layer operato...</div>
<svg class="a" style="left:1731px;top:569px" width="9" height="9" viewBox="0 0 9 9"><path d="M1 1l7 7M8 1l-7 7" stroke="#5a5a5a" stroke-width="1"/></svg>
<svg class="a" style="left:1756px;top:563px" width="18" height="18" viewBox="0 0 18 18"><path d="M1 5V1h4M13 1h4v4M17 13v4h-4M5 17H1v-4" fill="none" stroke="#ddd" stroke-width="1.3"/><text x="4.5" y="14" font-family="Liberation Sans" font-weight="bold" font-size="13" fill="#eee">2</text></svg>
<div class="t" style="left:1783px;top:567px;font-size:11px;color:#e0e0e0">Secondary Vi...</div>
<svg class="a" style="left:1875px;top:568px" width="10" height="10" viewBox="0 0 10 10"><path d="M1 1l8 8M9 1l-8 8" stroke="#bbb" stroke-width="1.2"/></svg>
<div class="a" style="left:1596px;top:585px;width:324px;height:43px;background:#3d3d3d"></div>
<div class="a" style="left:1762px;top:592px;width:1px;height:30px;background:#353535"></div>
<div class="a" style="left:1844px;top:592px;width:1px;height:30px;background:#353535"></div>
<div class="a" style="left:1773px;top:594px;width:26px;height:26px;border-radius:50%;background:#5b7a94"></div>
<div class="a" style="left:1807px;top:594px;width:26px;height:26px;border-radius:50%;background:#5b7a94"></div>
<div class="a" style="left:1855px;top:594px;width:26px;height:26px;border-radius:50%;background:#5b7a94"></div>
<svg class="a" style="left:1773px;top:594px" width="130" height="26" viewBox="0 0 130 26">
 <g fill="none" stroke="#e8e8e8" stroke-width="2"><path d="M6 14c3-4 6-4 8-2s5 2 7-1"/><path d="M7 10c2-4 9-5 12-1M8 17c3 3 9 3 11 0" stroke-width="1.2"/></g>
 <rect x="40" y="8" width="13" height="10" fill="none" stroke="#e8e8e8" stroke-width="1.4"/><path d="M41 15l4-3 4 2 3-2v5h-11z" fill="#ccc"/>
 <path d="M88 9l5 4-5 4zM98 7l-4 6 4 6z" fill="#eee"/>
 <path d="M122 8l7 3-7 4 7 0-8 4h-5z" fill="#c9c9c9"/>
</svg>
<div class="a" style="left:1596px;top:628px;width:324px;height:452px;background:linear-gradient(90deg,rgba(0,0,0,0) 50%,rgba(0,0,0,.45) 100%),linear-gradient(180deg,#767676 0%,#5a5a5a 45%,#404040 100%)"></div>
<div class="a" style="left:1596px;top:1063px;width:324px;height:17px;background:linear-gradient(90deg,#3e3e3e,#2e2e2e)"></div>

<svg class="a" style="left:1606px;top:640px" width="305" height="423" viewBox="1606 640 305 423">
 <defs>
  <linearGradient id="ssky" x1="1911" y1="640" x2="1760" y2="850" gradientUnits="userSpaceOnUse">
   <stop offset="0" stop-color="#c8eea0"/><stop offset="0.4" stop-color="#e8e888"/><stop offset="1" stop-color="#f2d468"/>
  </linearGradient>
  <linearGradient id="srock" x1="0" y1="810" x2="0" y2="1063" gradientUnits="userSpaceOnUse">
   <stop offset="0" stop-color="#c45a4c"/><stop offset="0.35" stop-color="#b04842"/><stop offset="0.6" stop-color="#7a3038"/><stop offset="0.8" stop-color="#3e2830"/><stop offset="1" stop-color="#2a1e26"/>
  </linearGradient>
  <linearGradient id="stop" x1="1620" y1="720" x2="1850" y2="650" gradientUnits="userSpaceOnUse">
   <stop offset="0" stop-color="#1e1418"/><stop offset="0.45" stop-color="#3a1b22"/><stop offset="0.75" stop-color="#a04240"/><stop offset="1" stop-color="#c85048"/>
  </linearGradient>
 <filter id="sblur" filterUnits="userSpaceOnUse" x="1500" y="600" width="500" height="500"><feGaussianBlur stdDeviation="5"/></filter>
 </defs>
 <rect x="1606" y="640" width="305" height="423" fill="url(#ssky)"/>
 <circle cx="1821" cy="732" r="17.5" fill="#f2f6a0"/>
 <path fill="#d87c68" d="M1606 780L1646 741 1659 724 1696 716 1709 741 1722 749 1734 754 1763 804 1770 830 1606 840Z"/>
 <path fill="#e08460" d="M1911 699L1889 716 1872 766 1851 795 1830 821 1826 837 1835 900 1868 1063 1911 1063Z"/>
 <path fill="url(#stop)" d="M1606 640L1855 640 1847 657 1830 666 1797 664 1776 682 1755 699 1726 708 1696 720 1676 728 1659 724 1646 741 1638 762 1621 779 1606 781Z"/>
 <path fill="url(#srock)" d="M1606 837L1621 825 1646 821 1663 833 1701 821 1713 816 1734 825 1755 812 1789 806 1805 808 1810 825 1830 846 1847 879 1860 921 1864 984 1868 1063 1606 1063Z"/>
 <path fill="#c65a48" opacity="0.7" filter="url(#sblur)" d="M1606 850L1700 830 1780 840 1800 880 1720 900 1606 920Z"/>
 <path fill="#b04a44" d="M1858 854L1872 837 1889 833 1911 846 1911 1063 1875 1063 1864 921 1858 879Z"/>
 <path fill="#d08858" opacity="0.45" filter="url(#sblur)" d="M1860 852L1872 838 1889 834 1911 846 1911 856 1885 850 1866 860Z"/>
 <path fill="#5e2a3a" opacity="0.5" filter="url(#sblur)" d="M1740 880L1810 830 1847 879 1860 921 1864 984 1868 1063 1790 1063 1760 960Z"/>
 <path fill="#4a2830" opacity="0.7" d="M1875 920L1911 900 1911 1063 1880 1063Z"/>
 <path fill="#2a1e24" d="M1606 971L1621 971 1701 1026 1763 1038 1818 1063 1606 1063Z"/>
 <path fill="#e89060" opacity="0.8" filter="url(#sblur)" d="M1848 880L1860 860 1870 900 1876 1000 1872 1063 1864 1063 1860 960Z"/>
 <g transform="translate(1800 762) scale(1.25) translate(-1800 -760)"><path fill="#3a1a28" d="M1798 760l3 1 1 3 2 2 1 3 2 5 1 7-1 1-1-4-1-4v8l-1 8-1 9h-2l1-8v-7h-3l-2 8v7h-2l1-7 2-9v-7h-1l-1 6-1 1-1-6 1-5 2-4 2-2z"/></g>
</svg>

<!-- BOTTOM PANELS -->
<div class="a" style="left:39px;top:760px;width:1246px;height:320px;background:#333333"></div>
<div class="a" style="left:41px;top:770px;width:194px;height:25px;background:#424242;clip-path:polygon(3% 0,94% 0,100% 100%,0 100%)"></div>
<svg class="a" style="left:53px;top:773px" width="20" height="18" viewBox="0 0 20 18"><g fill="#ddd"><rect x="1" y="1" width="4" height="4"/><rect x="6" y="1" width="4" height="4"/><rect x="1" y="6" width="4" height="4"/><rect x="6" y="6" width="4" height="4" fill="#999"/><path d="M16 6l2 1.5-5 6-2-1.5z"/><path d="M11 12c-2 0-3 1-3.5 2.5L6 17c2.5.3 5-.7 6.5-3.5z" fill="#f0f0f0"/></g></svg>
<div class="t" style="left:81px;top:776px;font-size:11px;color:#dcdcdc">Brush manager</div>
<svg class="a" style="left:211px;top:777px" width="10" height="10" viewBox="0 0 10 10"><path d="M1 1l8 8M9 1l-8 8" stroke="#aaa" stroke-width="1.2"/></svg>
<div class="a" style="left:39px;top:795px;width:808px;height:32px;background:#3d3d3d"></div>
<div class="a" style="left:49px;top:801px;width:178px;height:20px;border-radius:10px;background:#393939"></div>
<svg class="a" style="left:54px;top:804px" width="14" height="14" viewBox="0 0 14 14"><circle cx="8" cy="6" r="4" fill="none" stroke="#ddd" stroke-width="1.4"/><path d="M5 9l-3 3" stroke="#ddd" stroke-width="1.6"/></svg>
<div class="t" style="left:73px;top:805px;font-size:10px;font-style:italic;color:#bdbdbd">Search</div>
<div class="t" style="left:266px;top:805px;font-size:10px;color:#cfcfcf">File</div>
<div class="t" style="left:309px;top:805px;font-size:10px;color:#cfcfcf">Edit</div>
<div class="t" style="left:354px;top:805px;font-size:10px;color:#cfcfcf">View</div>
<svg class="a" style="left:805px;top:803px" width="20" height="16" viewBox="0 0 20 16"><text x="1" y="10" font-family="Liberation Sans" font-size="10" fill="#ccc">A</text><text x="7" y="13" font-family="Liberation Sans" font-size="8" fill="#ccc">z</text><path d="M15 4v10M13 12l2 2 2-2" fill="none" stroke="#ccc" stroke-width="1.1"/></svg>
<!-- list panel -->
<div class="a" style="left:39px;top:827px;width:201px;height:19px;background:#3d3d3d"></div>
<div class="t b" style="left:53px;top:832px;font-size:10px;color:#eeeeee">All</div>
<div class="t" style="left:95px;top:832px;font-size:10px;color:#7c7c7c">Default</div>
<div class="t" style="left:159px;top:832px;font-size:10px;color:#7c7c7c">User</div>
<div class="a" style="left:39px;top:846px;width:201px;height:231px;background:#4a4a4a"></div>
<div class="a" style="left:233px;top:853px;width:6px;height:188px;background:#444"></div>
<div class="a" style="left:233px;top:853px;width:6px;height:90px;background:#5a5a5a;border-radius:2px"></div>
<div class="t b" style="left:54px;top:860px;font-size:10.5px;color:#d8d8d8">GLOBAL</div>
<div class="t b" style="left:54px;top:888px;font-size:10.5px;color:#d8d8d8">ERASER</div>
<div class="a" style="left:67px;top:909px;width:165px;height:28px;background:#5c7b96"></div>
<div class="a" style="left:52px;top:916px;width:12px;height:14px;background:#606060"></div>
<div class="t b" style="left:54px;top:916px;font-size:11px;color:#333">+</div>
<div class="t b" style="left:72px;top:916px;font-size:10.5px;color:#e4e4e4">DRAWING</div>
<div class="a" style="left:52px;top:943px;width:12px;height:14px;background:#606060"></div>
<div class="a" style="left:55px;top:949px;width:6px;height:2px;background:#3a3a3a"></div>
<div class="t b" style="left:72px;top:944px;font-size:10.5px;color:#d8d8d8">PAINTING</div>
<div class="a" style="left:58px;top:958px;width:1px;height:76px;background:#666"></div>
<div class="a" style="left:59px;top:974px;width:7px;height:1px;background:#666"></div>
<div class="a" style="left:59px;top:994px;width:7px;height:1px;background:#666"></div>
<div class="a" style="left:59px;top:1014px;width:7px;height:1px;background:#666"></div>
<div class="a" style="left:59px;top:1034px;width:7px;height:1px;background:#666"></div>
<div class="t" style="left:74px;top:968px;font-size:11px;color:#e0e0e0">watercolor</div>
<div class="t" style="left:74px;top:988px;font-size:11px;color:#e0e0e0">airbrush</div>
<div class="t" style="left:74px;top:1008px;font-size:11px;color:#e0e0e0">spray</div>
<div class="t" style="left:74px;top:1028px;font-size:11px;color:#e0e0e0">ink</div>
<div class="a" style="left:39px;top:1048px;width:201px;height:1px;background:#404040"></div>
<svg class="a" style="left:174px;top:1055px" width="44" height="16" viewBox="0 0 44 16"><path d="M8 2v12M2 8h12" stroke="#ccc" stroke-width="1.4"/><path d="M30 5h10M33 5V3h4v2M31 6h8l-1 9h-6z" fill="#ccc" stroke="#ccc" stroke-width="0.6"/></svg>
<!-- grid -->
<div class="a" style="left:240px;top:827px;width:607px;height:253px;background:#363636"></div>
<div class="a" style="left:245px;top:828px;width:591px;height:220px;background:#333333"></div>

<div class="a" style="left:245px;top:828px;width:146px;height:80px;background:#3a3a3a;"></div>
<div class="t" style="left:254px;top:884px;font-size:10.6px;font-weight:bold;color:#e2e2e2">Airbrush 12</div>
<svg class="a" style="left:376px;top:833px" width="9" height="11" viewBox="0 0 9 11"><path d="M2 5V3.5a2.5 2.5 0 015 0V5" fill="none" stroke="#ccc" stroke-width="1.2"/><rect x="1" y="5" width="7" height="5" rx="1" fill="#ccc"/><rect x="2.5" y="7" width="4" height="1" fill="#444"/></svg>
<div class="a" style="left:392px;top:828px;width:146px;height:80px;background:#3a3a3a;"></div>
<div class="t" style="left:401px;top:884px;font-size:10.6px;font-weight:bold;color:#e2e2e2">Airbrush w/bg 12</div>
<svg class="a" style="left:523px;top:833px" width="9" height="11" viewBox="0 0 9 11"><path d="M2 5V3.5a2.5 2.5 0 015 0V5" fill="none" stroke="#ccc" stroke-width="1.2"/><rect x="1" y="5" width="7" height="5" rx="1" fill="#ccc"/><rect x="2.5" y="7" width="4" height="1" fill="#444"/></svg>
<div class="a" style="left:538px;top:828px;width:146px;height:80px;background:#3a3a3a;"></div>
<div class="t" style="left:547px;top:884px;font-size:10.6px;font-weight:bold;color:#e2e2e2">Airbrush wisp 6</div>
<svg class="a" style="left:669px;top:833px" width="9" height="11" viewBox="0 0 9 11"><path d="M2 5V3.5a2.5 2.5 0 015 0V5" fill="none" stroke="#ccc" stroke-width="1.2"/><rect x="1" y="5" width="7" height="5" rx="1" fill="#ccc"/><rect x="2.5" y="7" width="4" height="1" fill="#444"/></svg>
<div class="a" style="left:685px;top:828px;width:146px;height:80px;background:#3a3a3a;"></div>
<div class="t" style="left:694px;top:884px;font-size:10.6px;font-weight:bold;color:#e2e2e2">Angle line Fill</div>
<svg class="a" style="left:816px;top:833px" width="9" height="11" viewBox="0 0 9 11"><path d="M2 5V3.5a2.5 2.5 0 015 0V5" fill="none" stroke="#ccc" stroke-width="1.2"/><rect x="1" y="5" width="7" height="5" rx="1" fill="#ccc"/><rect x="2.5" y="7" width="4" height="1" fill="#444"/></svg>
<div class="a" style="left:245px;top:909px;width:146px;height:80px;background:#3a3a3a;"></div>
<div class="t" style="left:254px;top:965px;font-size:10.6px;font-weight:bold;color:#e2e2e2">Calligraphic pencil 256</div>
<svg class="a" style="left:376px;top:914px" width="9" height="11" viewBox="0 0 9 11"><path d="M2 5V3.5a2.5 2.5 0 015 0V5" fill="none" stroke="#ccc" stroke-width="1.2"/><rect x="1" y="5" width="7" height="5" rx="1" fill="#ccc"/><rect x="2.5" y="7" width="4" height="1" fill="#444"/></svg>
<div class="a" style="left:392px;top:909px;width:146px;height:80px;background:#5c7b96;border:1px solid #7d9ab3;"></div>
<div class="t" style="left:401px;top:965px;font-size:10.6px;font-weight:bold;font-style:italic;color:#e6eef4">Calligraphy brush 23</div>
<svg class="a" style="left:523px;top:914px" width="9" height="11" viewBox="0 0 9 11"><path d="M2 5V3.5a2.5 2.5 0 015 0V5" fill="none" stroke="#ccc" stroke-width="1.2"/><rect x="1" y="5" width="7" height="5" rx="1" fill="#ccc"/><rect x="2.5" y="7" width="4" height="1" fill="#444"/></svg>
<div class="a" style="left:538px;top:909px;width:146px;height:80px;background:#3a3a3a;"></div>
<div class="t" style="left:547px;top:965px;font-size:10.6px;font-weight:bold;color:#e2e2e2">Calligraphy pen 48</div>
<svg class="a" style="left:669px;top:914px" width="9" height="11" viewBox="0 0 9 11"><path d="M2 5V3.5a2.5 2.5 0 015 0V5" fill="none" stroke="#ccc" stroke-width="1.2"/><rect x="1" y="5" width="7" height="5" rx="1" fill="#ccc"/><rect x="2.5" y="7" width="4" height="1" fill="#444"/></svg>
<div class="a" style="left:685px;top:909px;width:146px;height:80px;background:#3a3a3a;"></div>
<div class="t" style="left:694px;top:965px;font-size:10.6px;font-weight:bold;color:#e2e2e2">Charcoal dual texture 24</div>
<svg class="a" style="left:816px;top:914px" width="9" height="11" viewBox="0 0 9 11"><path d="M2 5V3.5a2.5 2.5 0 015 0V5" fill="none" stroke="#ccc" stroke-width="1.2"/><rect x="1" y="5" width="7" height="5" rx="1" fill="#ccc"/><rect x="2.5" y="7" width="4" height="1" fill="#444"/></svg>
<div class="a" style="left:245px;top:990px;width:146px;height:58px;background:#3a3a3a;"></div>
<svg class="a" style="left:376px;top:995px" width="9" height="11" viewBox="0 0 9 11"><path d="M2 5V3.5a2.5 2.5 0 015 0V5" fill="none" stroke="#ccc" stroke-width="1.2"/><rect x="1" y="5" width="7" height="5" rx="1" fill="#ccc"/><rect x="2.5" y="7" width="4" height="1" fill="#444"/></svg>
<div class="a" style="left:392px;top:990px;width:146px;height:58px;background:#3a3a3a;"></div>
<svg class="a" style="left:523px;top:995px" width="9" height="11" viewBox="0 0 9 11"><path d="M2 5V3.5a2.5 2.5 0 015 0V5" fill="none" stroke="#ccc" stroke-width="1.2"/><rect x="1" y="5" width="7" height="5" rx="1" fill="#ccc"/><rect x="2.5" y="7" width="4" height="1" fill="#444"/></svg>
<div class="a" style="left:538px;top:990px;width:146px;height:58px;background:#3a3a3a;"></div>
<svg class="a" style="left:669px;top:995px" width="9" height="11" viewBox="0 0 9 11"><path d="M2 5V3.5a2.5 2.5 0 015 0V5" fill="none" stroke="#ccc" stroke-width="1.2"/><rect x="1" y="5" width="7" height="5" rx="1" fill="#ccc"/><rect x="2.5" y="7" width="4" height="1" fill="#444"/></svg>
<div class="a" style="left:685px;top:990px;width:146px;height:58px;background:#3a3a3a;"></div>
<svg class="a" style="left:816px;top:995px" width="9" height="11" viewBox="0 0 9 11"><path d="M2 5V3.5a2.5 2.5 0 015 0V5" fill="none" stroke="#ccc" stroke-width="1.2"/><rect x="1" y="5" width="7" height="5" rx="1" fill="#ccc"/><rect x="2.5" y="7" width="4" height="1" fill="#444"/></svg>
<!-- brush thumbnails -->
<svg class="a" style="left:245px;top:828px" width="591" height="220" viewBox="245 828 591 220">
<defs><filter id="tb1" filterUnits="userSpaceOnUse" x="200" y="800" width="700" height="300"><feGaussianBlur stdDeviation="1.3"/></filter>
<filter id="tb2" filterUnits="userSpaceOnUse" x="200" y="800" width="700" height="300"><feTurbulence type="fractalNoise" baseFrequency="0.9" numOctaves="1" result="n"/><feColorMatrix in="n" type="matrix" values="0 0 0 0 1  0 0 0 0 1  0 0 0 0 1  0 0 0 -1.6 1.4" result="m"/><feComposite in="SourceGraphic" in2="m" operator="in"/></filter></defs>
<path d="M300.1 850.4L316.9 837.6 301.4 857.8 328.2 838.6 305.6 864.2 333.7 846.2 314.0 867.0 337.1 855.2 323.2 868.0 340.0 867.0 M310.6 845.0C302.2 848.2 297.2 841.8 307.2 837.9" fill="none" stroke="#f4f4f4" stroke-width="6.5" stroke-linecap="round" stroke-linejoin="round" filter="url(#tb1)"/>
<path d="M446.1 850.4L462.9 837.6 447.4 857.8 474.2 838.6 451.6 864.2 479.7 846.2 460.0 867.0 483.1 855.2 469.2 868.0 486.0 867.0 M456.6 845.0C448.2 848.2 443.2 841.8 453.2 837.9" fill="none" stroke="#e0e0e0" stroke-width="6.5" stroke-linecap="round" stroke-linejoin="round" filter="url(#tb2)"/>
<path d="M592.1 849.3L608.9 835.7 593.4 857.1 620.2 836.7 597.6 863.9 625.7 844.9 606.0 867.0 629.1 854.4 615.2 868.0 632.0 867.0 M602.6 843.5C594.2 846.9 589.2 840.1 599.2 836.0" fill="none" stroke="#e8e8e8" stroke-width="4.5" stroke-linecap="round" stroke-linejoin="round" />
<path d="M735 842c-12 -2 -16 10 -4 13l18 -13 -2 14 12 -4 14 12 14 5 -14 -10 -14 -2" fill="none" stroke="#f4f4f4" stroke-width="2.8" stroke-linejoin="round"/>
<path d="M297.3 930.3L315.7 916.7 298.7 938.1 328.1 917.7 303.3 944.9 334.1 925.9 312.5 948.0 337.8 935.4 322.6 949.0 341.0 948.0 M308.8 924.5C299.6 927.9 294.1 921.1 305.1 917.0" fill="none" stroke="#f4f4f4" stroke-width="6" stroke-linecap="round" stroke-linejoin="round" />
<path d="M443.3 930.3L461.7 916.7 444.7 938.1 474.1 917.7 449.3 944.9 480.1 925.9 458.5 948.0 483.8 935.4 468.6 949.0 487.0 948.0 M454.8 924.5C445.6 927.9 440.1 921.1 451.1 917.0" fill="none" stroke="#f4f4f4" stroke-width="7" stroke-linecap="round" stroke-linejoin="round" />
<path d="M589.4 930.3L608.6 916.7 590.8 938.1 621.6 917.7 595.6 944.9 627.8 925.9 605.2 948.0 631.6 935.4 615.8 949.0 635.0 948.0 M601.4 924.5C591.8 927.9 586.0 921.1 597.6 917.0" fill="none" stroke="#f4f4f4" stroke-width="1.8" stroke-linecap="round" stroke-linejoin="round" />
<path d="M738 934c8 -4 14 -8 22 -10l-6 9 15 -3 -5 8 14 5" fill="none" stroke="#f0f0f0" stroke-width="8" stroke-linecap="round" stroke-linejoin="round" filter="url(#tb1)"/>
<path d="M281 1016c14 -6 24 -12 36 -12 -6 6 -12 14 -2 14s14 -2 22 -2c-8 4 -6 10 16 12" fill="none" stroke="#f4f4f4" stroke-width="2" stroke-linecap="round" stroke-linejoin="round"/>
<path d="M431 1016c14 -6 26 -14 38 -13 -6 6 -14 14 -2 15s16 -2 22 -2c-8 4 -4 10 10 12" fill="none" stroke="#f4f4f4" stroke-width="4.5" stroke-linecap="round" stroke-linejoin="round"/>
<path d="M590.3 1011.3L608.7 997.7 591.7 1019.1 621.1 998.7 596.3 1025.9 627.1 1006.9 605.5 1029.0 630.8 1016.4 615.6 1030.0 634.0 1029.0 M601.8 1005.5C592.6 1008.9 587.1 1002.1 598.1 998.0" fill="none" stroke="#d0d0d0" stroke-width="5.5" stroke-linecap="round" stroke-linejoin="round" filter="url(#tb2)"/>
<path d="M735 1015c10 -4 16 -8 24 -10l-6 10 16 -3 -4 8 18 5" fill="none" stroke="#f4f4f4" stroke-width="10" stroke-linecap="round" stroke-linejoin="round"/>
</svg>
<!-- footer -->
<div class="a" style="left:240px;top:1048px;width:607px;height:29px;background:#393939"></div>
<div class="t" style="left:265px;top:1057px;font-size:10px;font-style:italic;font-weight:bold;color:#8e8e8e">51 brushes</div>
<div class="a" style="left:741px;top:1062px;width:7px;height:1px;background:#999"></div>
<div class="a" style="left:764px;top:1058px;width:51px;height:8px;border-radius:4px;background:#343434"></div>
<div class="a" style="left:761px;top:1057px;width:10px;height:10px;border-radius:50%;background:#d6d6d6"></div>
<svg class="a" style="left:823px;top:1057px" width="10" height="10" viewBox="0 0 10 10"><path d="M5 1v8M1 5h8" stroke="#aaa" stroke-width="1.2"/></svg>
<div class="a" style="left:837px;top:828px;width:8px;height:220px;background:#363636"></div>
<div class="a" style="left:838px;top:828px;width:6px;height:45px;border-radius:2px;background:#505050"></div>
<div class="a" style="left:39px;top:1077px;width:1246px;height:3px;background:#303030"></div>

<!-- BRUSH PREVIEW -->
<div class="a" style="left:850px;top:770px;width:128px;height:25px;background:#393939;clip-path:polygon(4% 0,93% 0,100% 100%,0 100%)"></div>
<svg class="a" style="left:866px;top:774px" width="16" height="16" viewBox="0 0 16 16"><circle cx="8" cy="8" r="6.5" fill="none" stroke="#666" stroke-width="1.2"/><path d="M5 11l6-6" stroke="#777" stroke-width="2"/></svg>
<div class="t" style="left:892px;top:776px;font-size:11px;color:#767676">Controller...</div>
<svg class="a" style="left:966px;top:778px" width="9" height="9" viewBox="0 0 9 9"><path d="M1 1l7 7M8 1l-7 7" stroke="#5a5a5a" stroke-width="1"/></svg>
<div class="a" style="left:978px;top:770px;width:133px;height:25px;background:#424242;clip-path:polygon(4% 0,93% 0,100% 100%,0 100%)"></div>
<svg class="a" style="left:989px;top:773px" width="18" height="18" viewBox="0 0 18 18"><path d="M1 5V1h4M13 1h4v4M17 13v4h-4M5 17H1v-4" fill="none" stroke="#ddd" stroke-width="1.2"/><path d="M13 3l2 1.5-4 5-2-1.5z" fill="#ddd"/><path d="M9 8.5c-2.5 0-3.5 1.5-4 3L3 14c2.5.5 6-1 7-3.5z" fill="#f0f0f0"/></svg>
<div class="t" style="left:1017px;top:776px;font-size:12px;color:#e0e0e0">Brush Pre...</div>
<svg class="a" style="left:1087px;top:777px" width="10" height="10" viewBox="0 0 10 10"><path d="M1 1l8 8M9 1l-8 8" stroke="#bbb" stroke-width="1.2"/></svg>
<div class="a" style="left:1120px;top:770px;width:115px;height:25px;background:#383838;clip-path:polygon(4% 0,93% 0,100% 100%,0 100%)"></div>
<div class="t" style="left:1142px;top:776px;font-size:11px;color:#6e6e6e">Preferenc...</div>
<svg class="a" style="left:1213px;top:778px" width="9" height="9" viewBox="0 0 9 9"><path d="M1 1l7 7M8 1l-7 7" stroke="#555" stroke-width="1"/></svg>
<svg class="a" style="left:1266px;top:776px" width="12" height="12" viewBox="0 0 12 12"><path d="M1 1l10 10M11 1l-10 10" stroke="#aaa" stroke-width="1.1"/></svg>
<div class="a" style="left:850px;top:795px;width:435px;height:37px;background:#3c3c3c"></div>
<div class="a" style="left:927px;top:797px;width:1px;height:33px;background:#363636"></div>
<div class="a" style="left:1207px;top:797px;width:1px;height:33px;background:#363636"></div>
<div class="t" style="left:879px;top:805px;font-size:10px;color:#d0d0d0">Menu</div>
<div class="a" style="left:1022px;top:802px;width:132px;height:19px;border-radius:9px;background:#333333"></div>
<div class="t" style="left:1030px;top:805px;font-size:10px;color:#dadada">BKG | Solid color</div>
<svg class="a" style="left:1138px;top:807px" width="9" height="8" viewBox="0 0 9 8"><path d="M1 1h7L4.5 7z" fill="#ccc"/></svg>
<div class="a" style="left:1161px;top:802px;width:24px;height:19px;background:#262626"></div>
<div class="a" style="left:1219px;top:798px;width:26px;height:26px;border-radius:50%;background:#5b7a94"></div>
<svg class="a" style="left:1219px;top:798px" width="66" height="26" viewBox="0 0 66 26">
 <g fill="none" stroke="#e8e8e8" stroke-width="2"><path d="M6 14c3-4 6-4 8-2s5 2 7-1"/><path d="M7 10c2-4 9-5 12-1M8 17c3 3 9 3 11 0" stroke-width="1.2"/></g>
 <rect x="40" y="8" width="13" height="10" fill="none" stroke="#ddd" stroke-width="1.4"/><path d="M41 15l4-3 4 2 3-2v5h-11z" fill="#ccc"/><path d="M38 9c-2 2-2 6 0 9" fill="none" stroke="#ccc" stroke-width="1.5"/>
</svg>
<div class="a" style="left:850px;top:832px;width:435px;height:245px;background:#262626"></div>
<svg class="a" style="left:850px;top:832px" width="435" height="245" viewBox="850 832 435 245">
 <g fill="none" stroke="#a4464f" stroke-linecap="round" stroke-linejoin="round">
  <path d="M862 911C890 892 930 872 972 871 1000 871 1020 880 1022 889 1000 888 960 880 930 888 910 900 915 930 945 938 975 943 990 925 995 916 1000 923 990 936 980 938" stroke-width="5.5"/>
  <path d="M982 937C1000 923 1040 924 1072 950 1050 944 1010 928 990 935 975 960 995 995 1040 1000 1080 1006 1110 1000 1140 985" stroke-width="8"/>
  <ellipse cx="1133" cy="924" rx="47" ry="47" stroke-width="20" transform="rotate(-10 1133 924)"/>
  <path d="M1100 995C1170 995 1235 980 1269 943" stroke-width="8"/>
 </g>
</svg>

</body></html>
